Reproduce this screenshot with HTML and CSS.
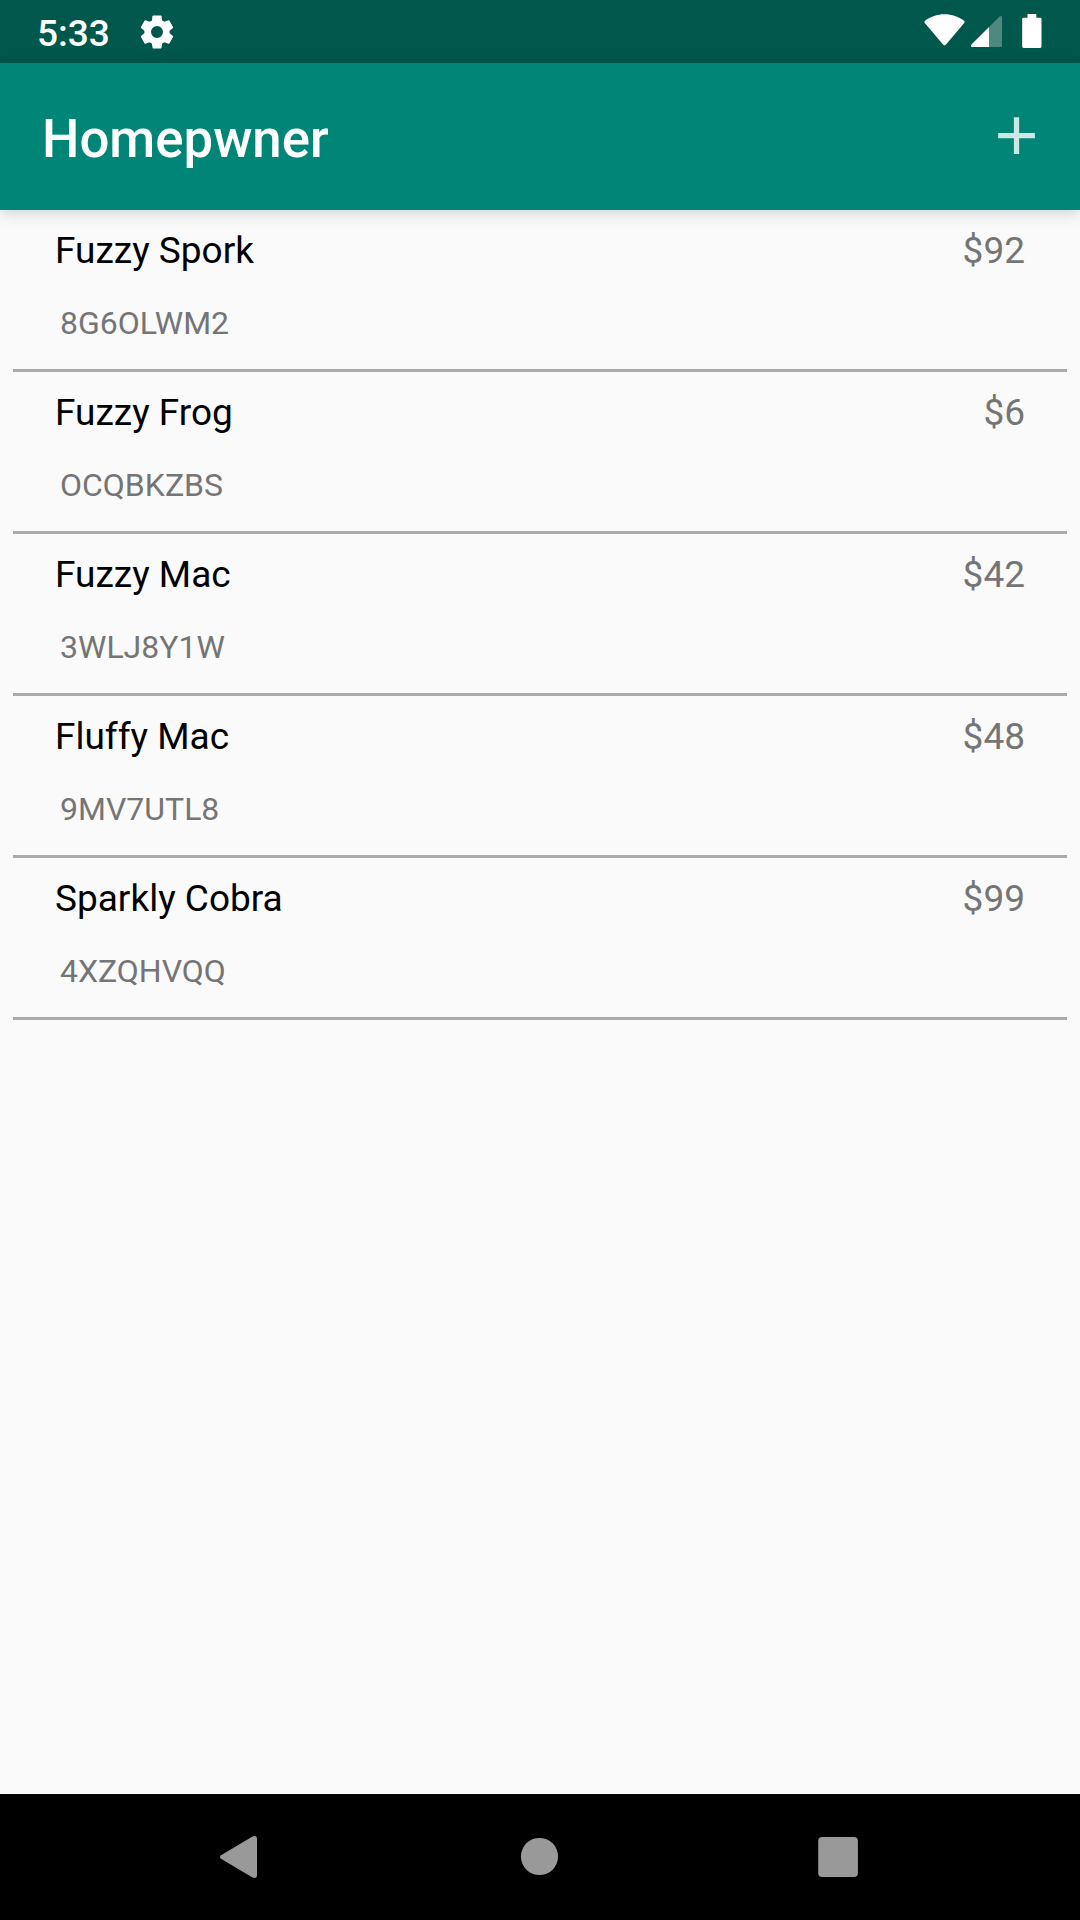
FILE: index.html
```html
<!DOCTYPE html>
<html lang="en">
<head>
<meta charset="utf-8">
<title>Homepwner</title>
<link rel="stylesheet" href="styles.css">
</head>
<body>
<div class="screen">
  <div class="status-bar">
    <span class="clock">5:33</span>
    <svg class="gear" viewBox="-20 -20 40 40">
      <circle r="9.300" fill="none" stroke="#fff" stroke-width="6.600"/>
      <defs><path id="tooth" d="M-3.700-16.400H3.700Q4.400-16.400 4.500-15.800L5.400-10H-5.400L-4.500-15.800Q-4.400-16.400-3.700-16.400Z"/></defs>
      <use href="#tooth"/><use href="#tooth" transform="rotate(60)"/><use href="#tooth" transform="rotate(120)"/><use href="#tooth" transform="rotate(180)"/><use href="#tooth" transform="rotate(240)"/><use href="#tooth" transform="rotate(300)"/>
    </svg>
    <div class="indicators">
      <svg class="wifi" viewBox="0 0 41 32"><path d="M.8 9Q-.1 7.700 1 6.700C6.500 2.600 13 .2 20.500 .2S34.500 2.600 40 6.700Q41.100 7.700 40.200 9L22 30.600Q20.500 32.200 19 30.600Z"/></svg>
      <svg class="signal" viewBox="0 0 31 31"><path fill-opacity=".3" d="M18 11 28.300.7Q29 0 30 0Q31 .2 31 1.500V29.500Q31 31 29.500 31H18Z"/><path d="M18 11V31H1.200Q0 31 0 30Q0 29 .7 28.300Z"/></svg>
      <svg class="battery" viewBox="0 0 20 34"><path d="M5.500 0H14.300V3.700H18.200Q19.500 3.700 19.500 5V32.500Q19.500 33.900 18.200 33.900H1.500Q.2 33.900 .2 32.500V5Q.2 3.700 1.500 3.700H5.500Z"/></svg>
    </div>
  </div>
  <header class="app-bar">
    <h1 class="title">Homepwner</h1>
    <svg class="add" viewBox="0 0 24 24"><path d="M19 13h-6v6h-2v-6H5v-2h6V5h2v6h6v2z"/></svg>
  </header>
  <main class="items">
    <div class="item"><div class="name">Fuzzy Spork</div><div class="price">$92</div><div class="serial">8G6OLWM2</div></div>
    <div class="item"><div class="name">Fuzzy Frog</div><div class="price">$6</div><div class="serial">OCQBKZBS</div></div>
    <div class="item"><div class="name">Fuzzy Mac</div><div class="price">$42</div><div class="serial">3WLJ8Y1W</div></div>
    <div class="item"><div class="name">Fluffy Mac</div><div class="price">$48</div><div class="serial">9MV7UTL8</div></div>
    <div class="item"><div class="name">Sparkly Cobra</div><div class="price">$99</div><div class="serial">4XZQHVQQ</div></div>
  </main>
  <nav class="nav-bar">
    <svg class="nav-icon" viewBox="0 0 60 60"><path d="M9 28.200 40.500 9.400Q45 7.800 45 12V48Q45 52.200 40.500 50.600L9 31.800Q7 30 9 28.200Z"/></svg>
    <svg class="nav-icon" viewBox="0 0 60 60"><circle cx="29.500" cy="29.500" r="18.600"/></svg>
    <svg class="nav-icon" viewBox="0 0 60 60"><rect x="10.200" y="10" width="39.700" height="40" rx="4"/></svg>
  </nav>
</div>
</body>
</html>
```
FILE: styles.css
```css
* { box-sizing: border-box; }

body {
  margin: 0;
  font-family: Roboto, "Liberation Sans", sans-serif;
}

svg { display: block; flex: none; }

.screen {
  display: flex;
  flex-direction: column;
  width: 1080px;
  height: 1920px;
  background: #fafafa;
  overflow: hidden;
}

.status-bar {
  display: flex;
  height: 63px;
  padding: 0 38px 0 37px;
  background: #00574b;
  color: #fff;
  fill: #fff;
}

.clock {
  width: 100px;
  padding-top: 12px;
  font-size: 37px;
  font-weight: 500;
  line-height: 44px;
}

.gear { width: 40px; height: 40px; margin-top: 11.500px; }

.indicators { display: flex; margin-left: auto; }
.wifi { width: 41px; height: 32px; margin: 14px 6px 0 0; }
.signal { width: 31px; height: 31px; margin: 16px 20px 0 0; }
.battery { width: 20px; height: 34px; margin-top: 14px; }

.app-bar {
  display: flex;
  align-items: center;
  justify-content: space-between;
  height: 147px;
  padding: 0 32px 0 42px;
  background: #008577;
  box-shadow: 0 3px 14px rgba(0, 0, 0, .17);
}

.title {
  margin: 0;
  padding-top: 5px;
  font-size: 52.750px;
  font-weight: 500;
  line-height: 62px;
  color: #fff;
}

.add { width: 63px; height: 63px; fill: #fff; fill-opacity: .8; margin-bottom: 2px; }

.items { flex: 1; padding: 0 13px; }

.item {
  display: grid;
  grid-template-columns: 1fr auto;
  grid-template-rows: 80px 1fr;
  height: 162px;
  padding: 0 42px;
  border-bottom: 3px solid #aaa;
  color: #757575;
}

.name, .price {
  padding-top: 19px;
  font-size: 37px;
  line-height: 44px;
}

.name { color: #000; }

.serial {
  padding: 13px 0 0 5px;
  font-size: 32px;
  line-height: 40px;
}

.nav-bar {
  display: flex;
  justify-content: center;
  gap: 238px;
  height: 126px;
  padding-top: 33px;
  background: #000;
  fill: #999;
}

.nav-icon { width: 60px; height: 60px; }
```
